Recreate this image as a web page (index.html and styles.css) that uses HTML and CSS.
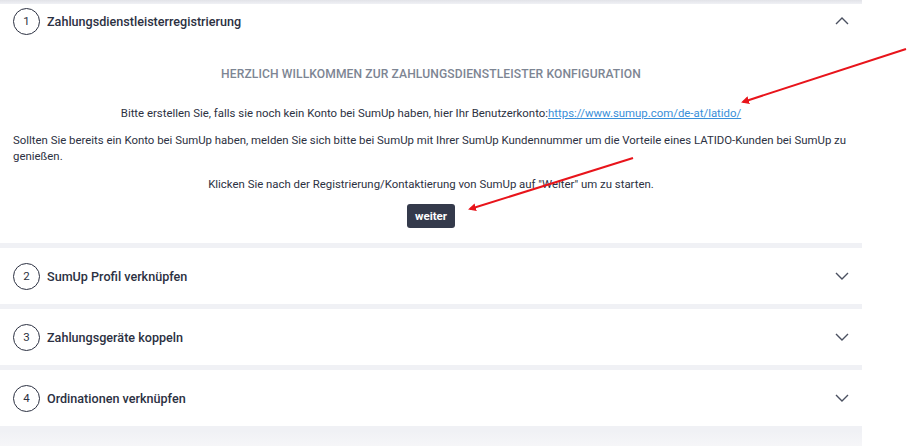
FILE: index.html
```html
<!DOCTYPE html>
<html lang="de">
<head>
<meta charset="utf-8">
<link rel="stylesheet" href="styles.css">
</head>
<body>
<div class="steps">
  <section class="panel panel-open">
    <div class="head head-first">
      <span class="num">1</span>
      <span class="title">Zahlungsdienstleisterregistrierung</span>
      <svg class="chev" width="14" height="8" viewBox="0 0 14 8"><path d="M1 7 L7 1 L13 7" fill="none" stroke="#4a5060" stroke-width="1.4"/></svg>
    </div>
    <div class="body">
      <h2 class="welcome">HERZLICH WILLKOMMEN ZUR ZAHLUNGSDIENSTLEISTER KONFIGURATION</h2>
      <p class="center intro">Bitte erstellen Sie, falls sie noch kein Konto bei SumUp haben, hier Ihr Benutzerkonto:<a href="#">https://www.sumup.com/de-at/latido/</a></p>
      <p class="left">Sollten Sie bereits ein Konto bei SumUp haben, melden Sie sich bitte bei SumUp mit Ihrer SumUp Kundennummer um die Vorteile eines LATIDO-Kunden bei SumUp zu genießen.</p>
      <p class="center">Klicken Sie nach der Registrierung/Kontaktierung von SumUp auf "Weiter" um zu starten.</p>
      <div class="actions"><button class="btn">weiter</button></div>
    </div>
  </section>
  <section class="panel">
    <div class="head">
      <span class="num">2</span>
      <span class="title">SumUp Profil verknüpfen</span>
      <svg class="chev" width="14" height="8" viewBox="0 0 14 8"><path d="M1 1 L7 7 L13 1" fill="none" stroke="#4a5060" stroke-width="1.4"/></svg>
    </div>
  </section>
  <section class="panel">
    <div class="head">
      <span class="num">3</span>
      <span class="title">Zahlungsgeräte koppeln</span>
      <svg class="chev" width="14" height="8" viewBox="0 0 14 8"><path d="M1 1 L7 7 L13 1" fill="none" stroke="#4a5060" stroke-width="1.4"/></svg>
    </div>
  </section>
  <section class="panel">
    <div class="head">
      <span class="num">4</span>
      <span class="title">Ordinationen verknüpfen</span>
      <svg class="chev" width="14" height="8" viewBox="0 0 14 8"><path d="M1 1 L7 7 L13 1" fill="none" stroke="#4a5060" stroke-width="1.4"/></svg>
    </div>
  </section>
  <div class="tail"></div>
</div>
<svg class="arrows" width="908" height="446" viewBox="0 0 908 446">
  <defs>
    <marker id="ah" markerWidth="8" markerHeight="8" refX="6" refY="4" orient="auto" markerUnits="userSpaceOnUse">
      <path d="M0 0 L8 4 L0 8 Z" fill="#e8141b"/>
    </marker>
  </defs>
  <line x1="906" y1="49" x2="743" y2="102" stroke="#e8141b" stroke-width="2" marker-end="url(#ah)"/>
  <line x1="633" y1="158" x2="470" y2="209" stroke="#e8141b" stroke-width="2" marker-end="url(#ah)"/>
</svg>
</body>
</html>
```
FILE: styles.css
```css
html, body {
  margin: 0;
  padding: 0;
  background: #ffffff;
}
body {
  font-family: Roboto, "Noto Sans", sans-serif;
  color: #2c3142;
  width: 908px;
  height: 446px;
  overflow: hidden;
  position: relative;
}
.steps {
  width: 862px;
  background: #f0f1f5;
  display: flex;
  flex-direction: column;
  gap: 5px;
  padding-top: 4px;
  background-image: linear-gradient(#e2e3e8, #f0f1f5 4px);
}
.panel {
  background: #ffffff;
}
.head {
  display: flex;
  align-items: center;
  height: 56px;
  padding: 0 13px;
}
.head-first {
  height: 34px;
}
.num {
  box-sizing: border-box;
  width: 27px;
  height: 27px;
  border: 1.6px solid #2c3142;
  border-radius: 50%;
  display: flex;
  align-items: center;
  justify-content: center;
  font-size: 11.5px;
  margin-right: 7px;
}
.title {
  font-size: 12.6px;
  font-weight: 500;
  flex: 1;
}
.chev {
  margin-right: 0;
}
.body {
  padding: 0 13px 15px;
  font-size: 11.4px;
  line-height: 16px;
}
.welcome {
  margin: 28px 0 23px;
  text-align: center;
  font-size: 12.1px;
  font-weight: 500;
  color: #7d8593;
  letter-spacing: 0.1px;
}
.body p {
  margin: 0 0 12px;
}
.body .intro {
  margin-bottom: 11px;
}
.center {
  text-align: center;
}
.body a {
  color: #3a8fd9;
  text-decoration: underline;
}
.actions {
  display: flex;
  justify-content: center;
  margin-top: 5px;
}
.btn {
  background: #343a4b;
  color: #ffffff;
  border: none;
  border-radius: 3px;
  font-family: Roboto, "Noto Sans", sans-serif;
  font-weight: 700;
  font-size: 11.5px;
  height: 24px;
  padding: 0 8px;
}
.tail {
  height: 18px;
  background: linear-gradient(#f0f1f5, #f7f7f9);
}
.arrows {
  position: absolute;
  left: 0;
  top: 0;
  pointer-events: none;
}
```
